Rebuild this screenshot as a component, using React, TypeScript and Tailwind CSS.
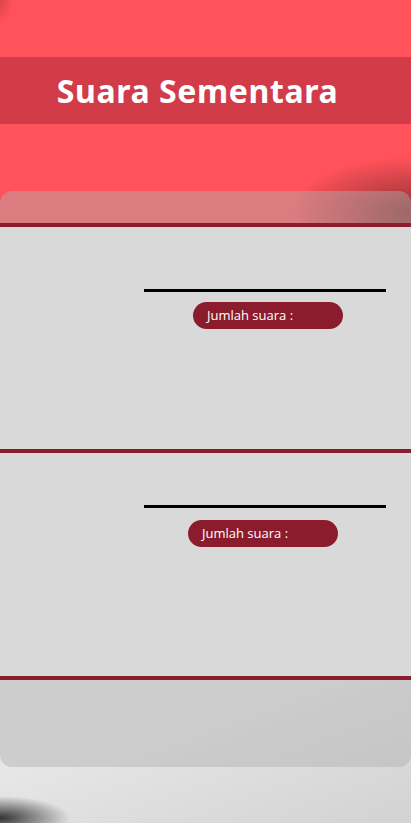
const sections = [
  { top: 'pt-[62px]', gap: 'mt-[10px]', pill: 'ml-[49px]', height: 'h-[226px]' },
  { top: 'pt-[52px]', gap: 'mt-[12px]', pill: 'ml-[44px]', height: 'h-[227px]' },
];

function VoteRow({ top, gap, pill, height }: (typeof sections)[number]) {
  return (
    <div className={`${height} border-t-4 border-[#8b1c2e] bg-[#d9d9d9] ${top}`}>
      <div className="ml-[144px] w-[242px]">
        <div className="h-[3px] w-full bg-black" />
        <div
          className={`${gap} ${pill} flex h-[27px] w-[150px] items-center rounded-full bg-[#8b1c2e] pl-[14px] text-[13px] text-white`}
          style={{ fontFamily: '"Open Sans", sans-serif' }}
        >
          Jumlah suara :
        </div>
      </div>
    </div>
  );
}

export default function App() {
  return (
    <div className="h-[823px] w-[411px] overflow-hidden bg-[image:radial-gradient(ellipse_120px_55px_at_100%_212px,rgba(70,25,25,0.6),transparent),radial-gradient(ellipse_70px_22px_at_0%_818px,rgba(20,20,20,0.85),transparent),radial-gradient(ellipse_12px_24px_at_0%_0%,rgba(150,40,40,0.35),transparent),linear-gradient(160deg,#ff525a_0%,#ff525a_35%,#e44750_42%,#e4e4e4_42%,#e6e6e6_80%,#d2d2d2_100%)]">
      <div className="pt-[57px]">
        <div className="flex h-[67px] items-center justify-center bg-[rgba(139,28,46,0.4)] pr-[16px]">
          <h1
            className="text-[32px] font-bold tracking-[0.6px] text-white"
            style={{ fontFamily: '"Noto Sans", sans-serif' }}
          >
            Suara Sementara
          </h1>
        </div>
      </div>

      <div className="mt-[67px] overflow-hidden rounded-[12px] bg-[rgba(175,175,175,0.45)]">
        <div className="h-[32px]" />
        {sections.map((s, i) => (
          <VoteRow key={i} {...s} />
        ))}
        <div className="h-[91px] border-t-4 border-[#8b1c2e]" />
      </div>
    </div>
  );
}
